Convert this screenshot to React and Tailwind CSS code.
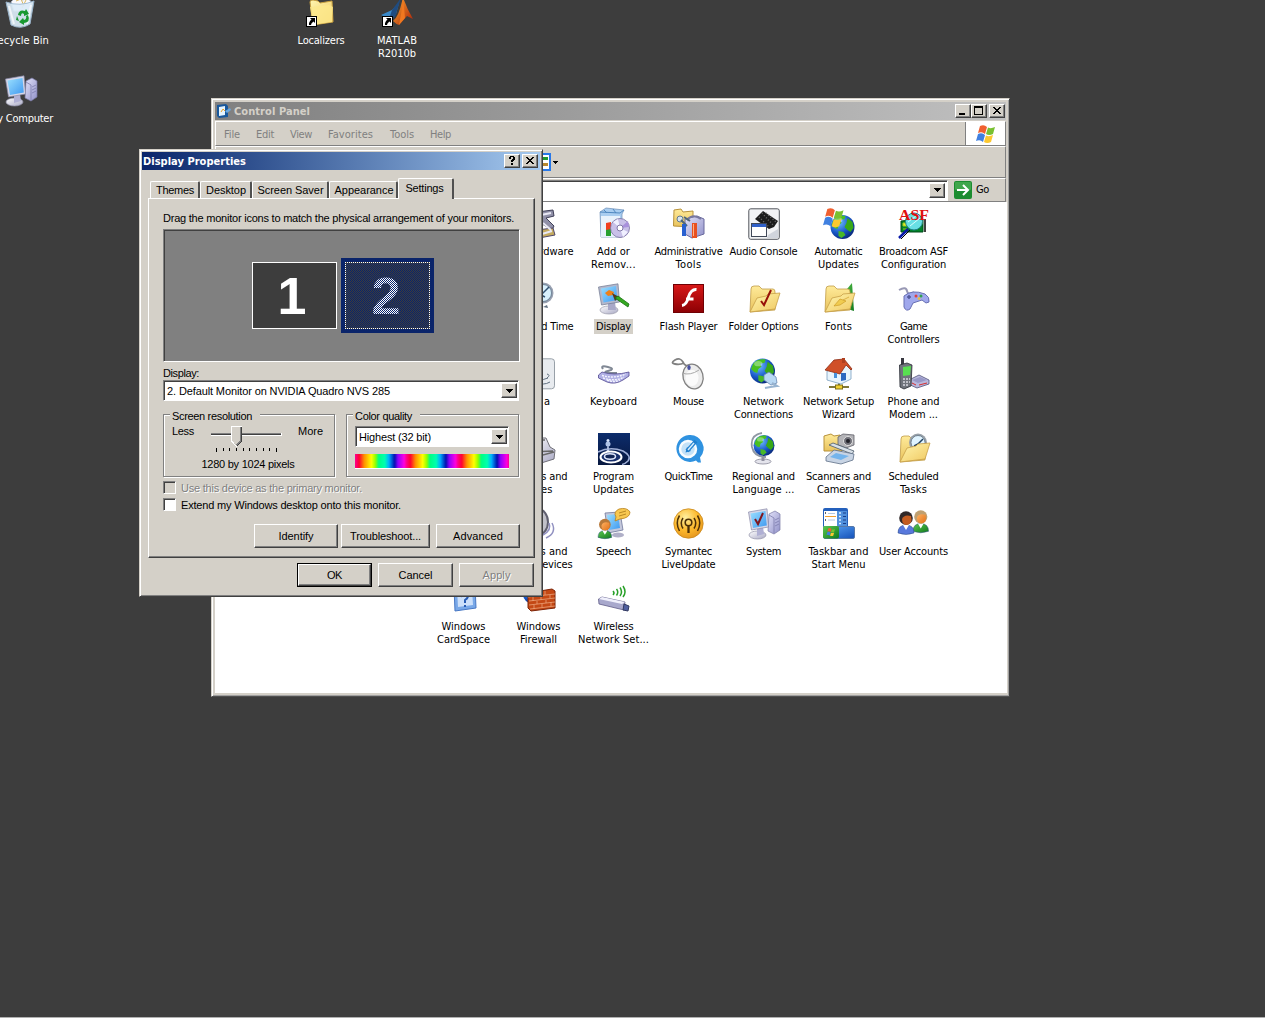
import { useLayoutEffect, useRef } from "react";

const tahoma = "font-['DejaVu_Sans_Condensed','DejaVu_Sans',sans-serif]";
const sans = "font-['Liberation_Sans',sans-serif]";

/* One line of text whose tracking is adjusted so that it fills a given width. */
function Fit({ w, className = "", children }) {
  const ref = useRef(null);
  useLayoutEffect(() => {
    const el = ref.current;
    el.style.letterSpacing = "0px";
    const natural = el.getBoundingClientRect().width;
    el.style.letterSpacing = `${(w + 1 - natural) / el.textContent.length}px`;
  }, [w, children]);
  return (
    <span ref={ref} className={`inline-block whitespace-nowrap ${className}`}>
      {children}
    </span>
  );
}

function Defs() {
  const lin = (id, a, b, diag) => (
    <linearGradient id={id} x1="0" y1="0" x2={diag ? "1" : "0"} y2="1">
      <stop offset="0" stopColor={a} />
      <stop offset="1" stopColor={b} />
    </linearGradient>
  );
  return (
    <svg width="0" height="0" className="absolute">
      <defs>
        {lin("folder", "#fff6b0", "#f0c860", true)}
        {lin("folderBack", "#ffeb9a", "#e8c25c")}
        {lin("screen", "#9be0ff", "#3f98f0", true)}
        {lin("silver", "#ffffff", "#a8a8c4", true)}
        {lin("lilac", "#e4e4fa", "#9090c8", true)}
        {lin("red", "#d81818", "#8c0004")}
        {lin("green", "#5cc850", "#117a1c", true)}
        {lin("blue", "#5ca8f8", "#1450b8", true)}
        {lin("orange", "#ffb060", "#e07018", true)}
        {lin("navy", "#0c2c6c", "#081840")}
        {lin("flame", "#ffb030", "#a81c08", true)}
        <radialGradient id="sea" cx="0.35" cy="0.3" r="0.75">
          <stop offset="0" stopColor="#70c0ff" />
          <stop offset="0.6" stopColor="#1858c8" />
          <stop offset="1" stopColor="#082878" />
        </radialGradient>
        <radialGradient id="amber" cx="0.4" cy="0.3" r="0.7">
          <stop offset="0" stopColor="#fff0a0" />
          <stop offset="0.6" stopColor="#fdb92c" />
          <stop offset="1" stopColor="#e89a20" />
        </radialGradient>
      </defs>
    </svg>
  );
}

function Globe({ x = 16, y = 14, r = 12 }) {
  return (
    <g transform={`translate(${x} ${y}) scale(${r / 12})`}>
      <circle r="12" fill="url(#sea)" />
      <path d="M-9-7C-6-11-1-12 3-11L2-8-2-7-1-4-4-2-5 2-8 1-11-2Z" fill="#48c020" />
      <path d="M5-9 10-5 11 1 8 5 5 3 2 0 4-4Z" fill="#38a818" />
      <path d="M-4 4 1 5 3 8-1 11-4 9Z" fill="#48b828" />
      <ellipse cx="-4" cy="-7" rx="4" ry="2.5" fill="#fff" opacity=".35" />
    </g>
  );
}

function Flag({ x = 0, y = 0, s = 1 }) {
  return (
    <g transform={`translate(${x} ${y}) scale(${s})`}>
      <path d="M4 1Q8-1 11 2L9 9Q6 6 2 8Z" fill="#f06030" />
      <path d="M12 2.500Q15 4 19 2L17 9Q13 11 10 9Z" fill="#78c030" />
      <path d="M2 9Q6 7 9 10L7 17Q4 14 0 16Z" fill="#4080e0" />
      <path d="M10 10.500Q13 12 17 10L15 17Q11 19 8 17Z" fill="#fcc830" />
    </g>
  );
}

function Folder({ children }) {
  return (
    <>
      <path d="M2 29 3 6Q3 3 6 3L11 3 14 6 25 6Q27 6 27 9L27 27Z" fill="url(#folderBack)" stroke="#c09c48" strokeWidth=".8" />
      {children}
      <path d="M2 29 9 15 18 13 20 11 32 10 27 26Z" fill="url(#folder)" stroke="#c8a048" strokeWidth=".8" />
    </>
  );
}

function Computer({ children }) {
  return (
    <>
      <path d="M21 6 27 3 32 6 32 22 26 26 20 23Z" fill="url(#lilac)" stroke="#7878a4" strokeWidth=".7" />
      <path d="M21 7 26 10 26 25M27 12 31 10M27 15 31 13M27 18 31 16" stroke="#7c7cac" fill="none" strokeWidth=".8" />
      <ellipse cx="9.500" cy="27" rx="8.500" ry="4" fill="url(#silver)" stroke="#9090a8" strokeWidth=".7" />
      <path d="M9 20 15 19 16 26 9 28Z" fill="#b0b0d4" />
      <path d="M.5 4 19 .8 20.500 19 3.500 22Z" fill="#d8d8e8" stroke="#8888a8" strokeWidth=".7" />
      <path d="M2.500 5.500 17.500 3 18.800 17.500 5 20Z" fill="url(#screen)" />
      {children}
    </>
  );
}

function Person({ x, y, s = 1, hair, face, body }) {
  return (
    <g transform={`translate(${x} ${y}) scale(${s})`}>
      <path d="M0 22Q0 14 8 14Q16 14 16 22Q8 25 0 22Z" fill={body} stroke="#284880" strokeWidth=".5" />
      <path d="M5 14 8 19 11 14Z" fill="#fff" />
      <circle cx="8" cy="7" r="6.800" fill={hair} />
      <path d="M4 8Q6 3 13 5Q15 13 9 14Q4 14 4 8Z" fill={face} />
    </g>
  );
}

const art = {
  hardware: (
    <>
      <path d="M14 4 30 2 31 8 23 10 31 18 29 22 16 14Z" fill="#9090a8" stroke="#404058" />
      <path d="M14 22 30 20 32 27 16 30Z" fill="#c4ab60" stroke="#50486c" />
      <path d="M18 7 28 5M20 15 28 22M19 26 29 23" stroke="#e8e8f4" strokeWidth="2" />
    </>
  ),
  clock: (
    <>
      <circle cx="20" cy="10" r="10.500" fill="#98a0b0" />
      <circle cx="20" cy="10" r="8.500" fill="#d8f0fc" stroke="#506880" strokeWidth=".7" />
      <path d="M18 12 26 4M18 12 22 14" stroke="#305070" strokeWidth="1.500" />
      <path d="M20 24 24 22 25 25Z" fill="#607080" />
    </>
  ),
  java: (
    <>
      <rect x="3" y=".8" width="28.500" height="30" rx="3" fill="#e8ebef" stroke="#98a0a8" />
      <path d="M14 24Q20 28 27 24M16 20Q20 23 25 20M16 8Q21 9 18 14M24 16Q28 17 24 20" stroke="#607080" fill="none" />
    </>
  ),
  printer: (
    <>
      <path d="M12 5 23 5 27 14 32 17 31 26 15 31 4 25Z" fill="url(#silver)" stroke="#707078" />
      <path d="M8 19 30 18M16 29 16 23 31 19M14 7 22 7" stroke="#686868" fill="none" strokeWidth="1.500" />
    </>
  ),
  speaker: (
    <>
      <ellipse cx="15" cy="14" rx="10" ry="13" fill="#c0c0c8" stroke="#606070" strokeWidth="2" />
      <ellipse cx="13" cy="14" rx="5" ry="8" fill="#707080" />
      <path d="M26 15Q29 22 20 27M29 15Q34 25 23 30" stroke="#9090c0" strokeWidth="1.500" fill="none" />
    </>
  ),
  addRemove: (
    <>
      <path d="M2 4 8 0 26 2 24 6 24 29 3 29Z" fill="#a9cdf0" stroke="#6c8cb4" strokeWidth=".7" />
      <path d="M3 8 22 8 22 29 3 29Z" fill="#e8f2fc" />
      <path d="M2 4 22 5 26 2M6 2 9 5M15 1 18 5" stroke="#5088c0" fill="none" />
      <path d="M8 15 13 14 13 22 8 22Z" fill="#f04020" />
      <path d="M8 22 13 21 13 28 8 28Z" fill="#28a030" />
      <circle cx="22" cy="20" r="9.500" fill="#c8c0e8" stroke="#7870a0" strokeWidth=".8" />
      <path d="M22 20 15 14 20 11ZM22 20 30 24 25 29Z" fill="#f0f0ff" />
      <path d="M22 20 30 13 31 19Z" fill="#a890dc" />
      <circle cx="22" cy="20" r="3" fill="#fff" stroke="#8078a8" />
    </>
  ),
  admin: (
    <>
      <path d="M.5 18 1 2 8 1 10 4 20 3 20 19Z" fill="url(#folderBack)" stroke="#b8923a" />
      <path d="M12 11 24 8 31 11 31 26 19 30 12 26Z" fill="url(#lilac)" stroke="#68689c" />
      <path d="M14 12Q20 5 28 11" stroke="#7878a0" fill="none" strokeWidth="2" />
      <circle cx="7" cy="11" r="3" fill="#d8e4ec" stroke="#607890" />
      <path d="M8 12 14 18M11 9 17 13" stroke="#506878" strokeWidth="2" />
      <path d="M9 16 13 16 13 28 9 28Z" fill="#2860d0" />
      <path d="M19 15 24 15 24 30 19 30Z" fill="#e85020" />
      <path d="M20.500 16 20.500 28" stroke="#ffb080" />
    </>
  ),
  audio: (
    <>
      <rect x=".8" y=".8" width="30.500" height="30.500" rx="2" fill="#f2f3f5" stroke="#40444c" strokeWidth=".9" />
      <path d="M15 3 30 13 26 19 21 21 7 11Z" fill="#1c1c1c" />
      <path d="M14 5 25 17M11 9 20 18M18 5 28 14" stroke="#686868" strokeDasharray="1 2" strokeWidth="1.500" />
      <rect x="3.500" y="15.500" width="15" height="13" fill="#fff" stroke="#404858" />
      <rect x="4" y="16" width="14" height="3" fill="#3060c8" />
      <path d="M20 27 30 21 30 30 19 30Z" fill="#d0d4dc" />
    </>
  ),
  updates: (
    <>
      <Globe x={19.5} y={19} r={12} />
      <Flag x={0} y={0} s={1.08} />
    </>
  ),
  asf: (
    <>
      <path d="M3 13 25 11 25 24 3 24Z" fill="#008428" stroke="#004818" />
      <path d="M5 15H9V18H5ZM5 21H9M20 13H24V16H20Z" fill="#e8f028" stroke="#a0c820" />
      <path d="M27 11V24" stroke="#000" strokeWidth="1.500" />
      <circle cx="16" cy="13.500" r="8.500" fill="#68e0e4" stroke="#208088" />
      <path d="M10 14 18 8M12 18 22 10" stroke="#d8ffff" />
      <path d="M10 21 1 30" stroke="#0818a8" strokeWidth="2.500" />
      <path d="M12 22 3 31" stroke="#000" />
      <text x="1" y="11.500" textLength="30" lengthAdjust="spacingAndGlyphs" fontFamily="Liberation Serif" fontWeight="bold" fontSize="15" fill="#e01010">ASF</text>
    </>
  ),
  display: (
    <>
      <ellipse cx="11" cy="27" rx="9" ry="4" fill="url(#silver)" stroke="#9898a8" strokeWidth=".7" />
      <path d="M10 20 17 19 18 27 10 27Z" fill="#a8a8c8" />
      <path d="M.5 4 20 .8 21.500 19 3.500 22Z" fill="#b4b8cc" stroke="#707890" strokeWidth=".7" />
      <path d="M3 5.500 18 3 19.500 17 5.500 19.500Z" fill="url(#screen)" />
      <path d="M7 10 11 7 16 9 15 12 10 13Z" fill="#f08018" />
      <path d="M14 10 21 14 17 18Z" fill="#583818" />
      <path d="M17 15 20 13 31 21 30 24Z" fill="#34a820" stroke="#187010" strokeWidth=".8" />
    </>
  ),
  flash: (
    <>
      <rect x=".5" y="1.500" width="30" height="28" fill="url(#red)" stroke="#700004" />
      <path d="M23.500 6.500Q18 6 15.500 14Q13.500 22 9 22.500M13 16H20.500" stroke="#fff" strokeWidth="3" fill="none" />
    </>
  ),
  folderOptions: (
    <>
      <Folder />
      <path d="M13 18 16 22 23 7" stroke="#981008" strokeWidth="2" fill="none" />
    </>
  ),
  fonts: (
    <>
      <path d="M19 12 29 0 31 28 18 24Z" fill="url(#green)" />
      <Folder />
      <path d="M11 23 17 16 23 18 17 22ZM20 17 26 14" stroke="#c89420" strokeWidth=".6" fill="#f0cc50" />
    </>
  ),
  game: (
    <>
      <path d="M1 7Q8 3 9 8T16 9" stroke="#9898b4" strokeWidth="2" fill="none" />
      <path d="M6 13Q14 6 27 11Q32 14 31 19L28 20 24 17 15 20 12 26Q8 29 6 24Z" fill="#a0a8ec" stroke="#6870b4" />
      <path d="M9 14H13M11 12V16" stroke="#505898" strokeWidth="1.500" />
      <circle cx="18" cy="13" r="1.500" fill="#e04040" />
      <circle cx="23" cy="13" r="1.500" fill="#30a050" />
      <circle cx="21" cy="15.500" r="1.300" fill="#f0c030" />
    </>
  ),
  keyboard: (
    <>
      <path d="M5 11Q2 7 10 9T10 13T19 15" stroke="#808894" strokeWidth="2" fill="none" />
      <path d="M.5 17 4 14Q16 18 31 14L31 18 25 22Q17 27 9 24L.5 20Z" fill="#b0b0e4" stroke="#504890" strokeWidth=".8" />
      <path d="M4 17.500Q16 21 28 16M5 20Q17 24 26 19M9 22Q17 25 22 22" stroke="#f4f4ff" strokeDasharray="2 1" strokeWidth="1.400" fill="none" />
    </>
  ),
  mouse: (
    <>
      <path d="M17 7Q12 9 10 4Q7-1 2 2T2 6Q7 7 11 5" stroke="#808080" strokeWidth="1.800" fill="none" />
      <ellipse cx="20" cy="18.500" rx="10" ry="12.500" fill="#ececec" stroke="#808080" strokeWidth="1.300" transform="rotate(-15 20 18.500)" />
      <ellipse cx="19" cy="20" rx="6.500" ry="8" fill="#fff" opacity=".8" />
      <path d="M9 15Q17 18 26 12" stroke="#aaa" fill="none" />
      <ellipse cx="16" cy="9.500" rx="1.700" ry="2.500" fill="#4850a0" />
    </>
  ),
  network: (
    <>
      <Globe x={14.5} y={13} r={12.5} />
      <path d="M16 17 21 14 28 19 29 25 23 27 16 22Z" fill="#b8d8f4" stroke="#6888b0" strokeWidth=".8" />
      <path d="M24 25 29 28Q22 29 17 30" stroke="#98b4d0" strokeWidth="2.200" fill="none" />
    </>
  ),
  house: (
    <>
      <path d="M6 29H26M16 23V30" stroke="#807838" strokeWidth="2" />
      <rect x="12.500" y="27" width="7" height="4" fill="#f0d030" stroke="#807018" />
      <path d="M4 13 4 22 18 26 28 21 28 11 22 4Z" fill="#e8f4fc" stroke="#78a0c0" strokeWidth=".8" />
      <path d="M2 12 11 2 21 1 29 11 28 12 23 7 17 16Z" fill="#d05028" stroke="#8c2c14" strokeWidth=".8" />
      <path d="M19 0H22V5H19Z" fill="#b04020" />
      <path d="M18 15H23V22L18 23Z" fill="#2c68c0" />
      <path d="M11 15H14V20H11Z" fill="#4890d8" />
    </>
  ),
  phone: (
    <>
      <path d="M11 22 21 17 31 22 31 26 19 30 10 26Z" fill="#b8b8dc" stroke="#505078" strokeWidth=".8" />
      <path d="M14 22 22 19 29 22 20 25Z" fill="#9898c8" />
      <path d="M14 25 18 27M21 27 29 25" stroke="#d83030" />
      <path d="M3 0H6V8H3Z" fill="#383840" />
      <path d="M1.500 7 9 5 14 7 13 28 6 31 2 29Z" fill="#70747c" stroke="#282c34" strokeWidth=".8" />
      <path d="M5 9 13 8 12 17 5 18Z" fill="#58e050" />
      <path d="M5 21H12M5 24H12M5 27H11" stroke="#d8d8e0" strokeDasharray="2 1" strokeWidth="1.500" />
    </>
  ),
  program: (
    <>
      <rect width="32" height="32" fill="url(#navy)" />
      <circle cx="10" cy="7.500" r="1.500" fill="#dce8ff" />
      <circle cx="10" cy="11" r="2.500" fill="#b0c4e8" />
      <path d="M9.500 13 10.500 13 12 21 8 21Z" fill="#c8d4f0" />
      <path d="M0 19Q12 13 25 18Q34 23 30 28Q27 31 24 31.500" stroke="#a0b0d8" fill="none" strokeWidth="1.500" />
      <ellipse cx="13" cy="24" rx="10.500" ry="5.500" stroke="#fff" fill="#18306c" strokeWidth="2" />
      <ellipse cx="12" cy="23.500" rx="5.500" ry="2.700" stroke="#dce4f8" fill="#102454" strokeWidth="1.500" />
    </>
  ),
  quicktime: (
    <>
      <path d="M16 2A13.500 13.500 0 1 0 23 27.500L25 29.500 28 29.500 27 24.500A13.500 13.500 0 0 0 16 2Z" fill="#2f92e0" />
      <circle cx="15" cy="16" r="8" fill="#c4e2f8" stroke="#f8fcff" strokeWidth="2.500" />
      <path d="M14 18 23 8" stroke="#2080d0" strokeWidth="4" />
      <path d="M12.500 19.500 14 14 18 18Z" fill="#2080d0" />
      <path d="M15 17 21 10" stroke="#d8eefc" strokeWidth="1.500" />
    </>
  ),
  regional: (
    <>
      <ellipse cx="15" cy="28.500" rx="8" ry="2.500" fill="#e4e4ec" stroke="#888898" strokeWidth=".8" />
      <path d="M15 23V28" stroke="#9090a0" strokeWidth="3" />
      <path d="M14 0Q2 2 4 14Q6 24 18 24" stroke="#9098a4" strokeWidth="1.800" fill="none" />
      <Globe x={16} y={12.5} r={10.5} />
    </>
  ),
  scanner: (
    <>
      <path d="M1 18 1 3 8 1 11 3 17 2 19 18Z" fill="url(#folderBack)" stroke="#b8923a" />
      <path d="M15 4 20 1 31 2 31 12 23 15 15 12Z" fill="#b4b4b8" stroke="#606068" strokeWidth=".8" />
      <circle cx="25" cy="8" r="4.500" fill="#707078" stroke="#e0e0e0" />
      <circle cx="25" cy="8" r="2" fill="#202028" />
      <path d="M6 12 10 10 31 18 29 21Z" fill="#d8e0e8" stroke="#485868" strokeWidth=".8" />
      <path d="M3 24 11 17 31 21 30 27 18 31 3 28Z" fill="#c8d4e4" stroke="#607088" strokeWidth=".8" />
      <path d="M7 24 13 20 26 23 18 27Z" fill="#74b4ec" />
    </>
  ),
  scheduled: (
    <Folder>
      <circle cx="20" cy="9.500" r="9" fill="#98a0a8" />
      <circle cx="20" cy="9.500" r="7" fill="#e0f4ff" stroke="#607080" strokeWidth=".8" />
      <path d="M20 11 25 6M20 11 16 13" stroke="#204060" strokeWidth="1.500" />
    </Folder>
  ),
  speech: (
    <>
      <path d="M7 5 22 4 25 22 10 25Z" fill="#c4c8dc" stroke="#70789c" strokeWidth=".8" />
      <path d="M9 7 20 6 22 20 11 22Z" fill="url(#screen)" />
      <ellipse cx="20" cy="27" rx="6" ry="2.500" fill="#b0b0c8" />
      <path d="M17 13 18 9Q15 4 21 1Q29-1 32 4Q32 10 22 11Z" fill="#f8c850" stroke="#b88018" strokeWidth=".8" />
      <path d="M21 5 28 3M21 8 28 6" stroke="#a87818" strokeWidth=".8" />
      <Person x={0} y={10.5} s={0.86} hair="#b87838" face="url(#orange)" body="url(#green)" />
    </>
  ),
  symantec: (
    <>
      <circle cx="15.500" cy="15.500" r="14.700" fill="url(#amber)" stroke="#c88820" strokeWidth=".8" />
      <circle cx="15.500" cy="14.500" r="3.300" fill="none" stroke="#4c3008" strokeWidth="1.600" />
      <path d="M15.500 17V25" stroke="#4c3008" strokeWidth="2.300" />
      <path d="M10 10Q6.500 15 10 20.500M6.500 7.500Q2 15 6.500 23M21 10Q24.500 15 21 20.500M24.500 7.500Q29 15 24.500 23" stroke="#4c3008" strokeWidth="1.500" fill="none" />
    </>
  ),
  computer: <Computer />,
  system: (
    <Computer>
      <path d="M7 11 10 16 15 5" stroke="#801820" strokeWidth="2" fill="none" />
    </Computer>
  ),
  taskbar: (
    <>
      <rect x="0" y="0" width="25" height="20" rx="2" fill="#2460bc" />
      <path d="M1 3H14V18H1Z" fill="#fff" />
      <path d="M14 3H24V18H14Z" fill="#5090dc" />
      <path d="M2 5H3M2 12H3" stroke="#303030" strokeWidth="1.500" />
      <path d="M2 8.500H13" stroke="#f0a030" />
      <path d="M5 5.500H12M5 12H12" stroke="#b4c8e0" />
      <path d="M16 5H18M16 8.500H18M16 12H18M16 15.500H18" stroke="#d8ecff" strokeWidth="1.700" />
      <path d="M20 5H23M20 8.500H23M20 12H23M20 15.500H23" stroke="#183c88" />
      <rect x=".5" y="18.500" width="31" height="12" rx="1.500" fill="url(#blue)" stroke="#5878a8" />
      <rect x="0" y="18" width="16" height="12.500" rx="2" fill="url(#green)" />
      <Flag x={3.5} y={20} s={0.45} />
    </>
  ),
  users: (
    <>
      <Person x={15} y={2} s={0.97} hair="#c0a070" face="url(#orange)" body="url(#green)" />
      <Person x={0} y={3} s={1} hair="#302828" face="#c45c20" body="#5878dc" />
    </>
  ),
  cardspace: (
    <>
      <path d="M6 4 27 2 28 25 7 28Z" fill="#78a8e8" stroke="#4878c4" />
      <path d="M9 6 24 5 25 22 10 24Z" fill="#cce0fa" />
      <path d="M13 14Q14 10 18 11Q22 14 17 17V20M17 22V24" stroke="#285cb4" strokeWidth="2" fill="none" />
    </>
  ),
  firewall: (
    <>
      <Globe x={10} y={11} r={10} />
      <path d="M5 10 29 6 32 8 32 25 8 28 5 25Z" fill="#c44814" stroke="#7c2408" />
      <path d="M5 14 32 11M6 18 32 15M6 22 32 19M7 26 32 23M13 9V13M22 8V12M10 14V18M18 13V17M27 12V15M14 18V21M23 17V20M11 22V26M19 21V24M28 19V23" stroke="#f0b088" strokeWidth=".7" />
    </>
  ),
  wireless: (
    <>
      <path d="M.5 16 4 14 27 19 26 27 1 21Z" fill="#a8a8cc" stroke="#605c88" strokeWidth=".8" />
      <path d="M1 16 4 14 27 19 24 21Z" fill="#f0f0fc" />
      <path d="M26 21 31 23 30 28 25 27Z" fill="#5060a0" stroke="#303860" />
      <path d="M15 8Q17 10 15 12M18.500 6Q21 9 18.500 12.500M22 4.500Q25 9 22 13M25 3Q29 9 25 14" stroke="#28a028" strokeWidth="1.500" fill="none" />
    </>
  ),
  bin: (
    <>
      <path d="M7 5 12 0 19 3 24 0 28 7 25 14 10 14Z" fill="#f8f8fc" stroke="#a8b0c0" />
      <path d="M12 4 17 2 20 9M22 3 18 11" stroke="#d8b860" fill="none" />
      <path d="M2 5Q16 10 30 4L26 27Q17 33 7 28Z" fill="#dcecf8" opacity=".92" stroke="#a0bcd4" />
      <path d="M5 9 10 27M27 8 23 27" stroke="#fff" strokeWidth="2" opacity=".7" />
      <path d="M14 18Q15 12 21 14L22 12 25 17 20 19 20 17Q17 15 17 19ZM24 18Q27 25 20 26L20 28 15 25 19 21 20 23Q23 22 22 19ZM13 19 15 24 12 23Z" fill="#189830" />
    </>
  ),
  shortcutFolder: (
    <>
      <path d="M5 5Q5 3 8 3L13 4 15 6 27 4 28 25 8 28Z" fill="url(#folder)" stroke="#c8a040" />
      <path d="M5 10 24 8 28 10 27 25 8 28Z" fill="#fce88c" opacity=".8" />
    </>
  ),
  matlab: (
    <>
      <path d="M0 18 11 13 18 6 15 17 8 22Z" fill="#3888c8" />
      <path d="M11 13 20 1 14 20 8 22Z" fill="#204c80" />
      <path d="M22 0Q25 10 32 22L26 19 18 28Q15 27 12 24Q18 20 22 0Z" fill="url(#flame)" />
      <path d="M22 0Q21 14 18 28L24 21Z" fill="#f07820" />
    </>
  ),
};

function Icon({ name, className = "size-8" }) {
  return (
    <svg viewBox="0 0 32 32" className={`block shrink-0 overflow-visible ${className}`}>
      {art[name]}
    </svg>
  );
}

const items = [
  null,
  ["hardware", ["Add Hardware", 69]],
  ["addRemove", ["Add or", 32], ["Remov...", 44]],
  ["admin", ["Administrative", 67], ["Tools", 25]],
  ["audio", ["Audio Console", 67]],
  ["updates", ["Automatic", 47], ["Updates", 40]],
  ["asf", ["Broadcom ASF", 68], ["Configuration", 64]],
  null,
  ["clock", ["Date and Time", 69]],
  ["display", ["Display", 34]],
  ["flash", ["Flash Player", 57]],
  ["folderOptions", ["Folder Options", 69]],
  ["fonts", ["Fonts", 26]],
  ["game", ["Game", 26], ["Controllers", 51]],
  null,
  ["java", ["Java", 24]],
  ["keyboard", ["Keyboard", 46]],
  ["mouse", ["Mouse", 30]],
  ["network", ["Network", 40], ["Connections", 58]],
  ["house", ["Network Setup", 70], ["Wizard", 32]],
  ["phone", ["Phone and", 51], ["Modem ...", 48]],
  null,
  ["printer", ["Printers and", 57], ["Faxes", 27]],
  ["program", ["Program", 40], ["Updates", 40]],
  ["quicktime", ["QuickTime", 47]],
  ["regional", ["Regional and", 62], ["Language ...", 61]],
  ["scanner", ["Scanners and", 64], ["Cameras", 42]],
  ["scheduled", ["Scheduled", 49], ["Tasks", 26]],
  null,
  ["speaker", ["Sounds and", 57], ["Audio Devices", 67]],
  ["speech", ["Speech", 34]],
  ["symantec", ["Symantec", 46], ["LiveUpdate", 53]],
  ["system", ["System", 34]],
  ["taskbar", ["Taskbar and", 59], ["Start Menu", 53]],
  ["users", ["User Accounts", 68]],
  ["cardspace", ["Windows", 43], ["CardSpace", 52]],
  ["firewall", ["Windows", 43], ["Firewall", 36]],
  ["wireless", ["Wireless", 39], ["Network Set...", 70]],
];

function Item({ item }) {
  if (!item) return <div />;
  const [icon, ...lines] = item;
  return (
    <div className="flex flex-col items-center">
      <Icon name={icon} />
      <div className={`mt-1 flex flex-col items-center px-0.5 py-px leading-[13px] ${icon === "display" ? "bg-[#d4d0c8]" : ""}`}>
        {lines.map(([text, w]) => (
          <Fit key={text} w={w} className="h-[13px]">{text}</Fit>
        ))}
      </div>
    </div>
  );
}

const raised = "border border-t-white border-l-white border-r-[#404040] border-b-[#404040] bg-[#d4d0c8] shadow-[inset_-1px_-1px_0_#808080]";
const sunken = "border border-t-[#808080] border-l-[#808080] border-r-white border-b-white shadow-[inset_1px_1px_0_#404040]";

function TitleButton({ children, className = "" }) {
  return (
    <div className={`flex h-[14px] w-4 items-center justify-center ${raised} ${className}`}>
      <svg viewBox="0 0 14 12" className="h-3 w-[14px]" shapeRendering="crispEdges">{children}</svg>
    </div>
  );
}

const Cross = () => <path d="M3 2H5V3H6V4H8V3H9V2H11V3H10V4H9V5H8V6H9V7H10V8H11V9H9V8H8V7H6V8H5V9H3V8H4V7H5V6H6V5H5V4H4V3H3Z" fill="#000" />;

function DropArrow({ className = "" }) {
  return (
    <div className={`flex w-4 items-center justify-center ${raised} ${className}`}>
      <svg viewBox="0 0 7 4" className="h-1 w-[7px]" shapeRendering="crispEdges"><path d="M0 0H7L3.500 4Z" /></svg>
    </div>
  );
}

function ControlPanel() {
  const menu = [["File", 16, "mr-4"], ["Edit", 18, "mr-4"], ["View", 22, "mr-4"], ["Favorites", 45, "mr-[17px]"], ["Tools", 24, "mr-4"], ["Help", 21, ""]];
  return (
    <section className={`absolute left-[211px] top-[98px] flex h-[599px] w-[799px] flex-col border border-t-[#d4d0c8] border-l-[#d4d0c8] border-r-[#404040] border-b-[#505050] bg-[#d4d0c8] p-[3px] text-[11px] shadow-[inset_1px_1px_0_#fff,inset_-1px_-1px_0_#a0a0a0] ${tahoma}`}>
      <header className="flex h-[18px] shrink-0 items-center bg-linear-to-r from-[#808080] to-[#c0c0c0] pr-px pl-px">
        <svg viewBox="0 0 16 16" className="mr-0.5 size-4">
          <path d="M1 2 10 1 12 3 12 14 3 15 1 13Z" fill="#18589c" />
          <path d="M3 4 9 3 9 12 3 13Z" fill="#e4f4ff" />
          <path d="M5 9 7 6 9 8" fill="none" stroke="#f0a020" />
          <path d="M9 8 14 5 15 7 11 10Z" fill="#68a8e0" />
        </svg>
        <Fit w={75} className="pt-0.5 font-bold text-[#d4d0c8]">Control Panel</Fit>
        <div className="ml-auto flex">
          <TitleButton><path d="M3 8H9V10H3Z" /></TitleButton>
          <TitleButton><path d="M2 1H11V10H2ZM3 3V9H10V3Z" fillRule="evenodd" /></TitleButton>
          <TitleButton className="ml-0.5"><Cross /></TitleButton>
        </div>
      </header>
      <div className="mt-px flex h-[25px] shrink-0 border border-t-white border-l-white border-r-[#808080] border-b-[#808080]">
        <nav className="flex flex-1 items-center border-r border-[#808080] pt-[3px] pl-2 text-[#808080]">
          {menu.map(([label, w, gap]) => (
            <Fit key={label} w={w - 1} className={gap}>{label}</Fit>
          ))}
        </nav>
        <div className="flex w-[39px] items-center justify-center bg-white">
          <svg viewBox="0 0 19 18" className="h-[18px] w-[19px]"><Flag /></svg>
        </div>
      </div>
      <div className="flex h-8 shrink-0 items-center border border-t-white border-l-white border-r-[#808080] border-b-[#808080] pl-[317px]">
        <svg viewBox="0 0 18 18" className="size-[18px]">
          <rect x="1" y="1" width="16" height="16" fill="#fff" stroke="#2878e8" strokeWidth="2" />
          <path d="M10 4H15V7H10Z" fill="#209830" />
          <path d="M10 10H15V13H10Z" fill="#b88830" />
        </svg>
        <svg viewBox="0 0 5 3" className="ml-0.5 h-[3px] w-[5px]" shapeRendering="crispEdges"><path d="M0 0H5L2.500 3Z" /></svg>
      </div>
      <div className="flex h-6 shrink-0 items-center border border-t-white border-l-white border-r-[#808080] border-b-[#808080]">
        <div className={`ml-14 flex h-[21px] w-[676px] justify-end bg-white p-0.5 ${sunken}`}>
          <DropArrow />
        </div>
        <svg viewBox="0 0 18 18" className="ml-1.5 size-[18px]">
          <rect width="18" height="18" rx="2" fill="#1c8c30" />
          <rect x="1" y="1" width="16" height="8" rx="1" fill="#50b058" opacity=".7" />
          <path d="M3 9H14M9 4 14 9 9 14" stroke="#fff" strokeWidth="2" fill="none" />
        </svg>
        <Fit w={12} className="ml-1">Go</Fit>
      </div>
      <main className="-mr-px flex-1 bg-white pt-1.5 pl-[211px]">
        <div className="grid grid-cols-[repeat(7,75px)] auto-rows-[75px]">
          {items.map((item, i) => <Item key={i} item={item} />)}
        </div>
      </main>
    </section>
  );
}

function Tab({ children, w, className }) {
  return (
    <div className={`flex justify-center rounded-t-[2px] border-t border-l border-white border-r-2 border-r-[#505050] ${className}`}>
      <Fit w={w} className="leading-4">{children}</Fit>
    </div>
  );
}

function Button({ children, w, className }) {
  return (
    <div className={`flex h-6 items-center justify-center ${raised} ${className}`}>
      <Fit w={w}>{children}</Fit>
    </div>
  );
}

function Slider() {
  return (
    <svg viewBox="0 0 72 30" className="h-[30px] w-[72px]" shapeRendering="crispEdges">
      <path d="M0 7H70V8H0Z" fill="#808080" />
      <path d="M0 8H70V9H0Z" fill="#404040" />
      <path d="M0 9H71V10H0ZM70 7H71V10H70Z" fill="#fff" />
      <path d="M20.500.5H30.500V15L25.500 20.500 20.500 15Z" fill="#d4d0c8" stroke="#fff" />
      <path d="M30.500.5V15L25.500 20.500" fill="none" stroke="#404040" />
      <path d="M29.500 1V15L25.500 19" fill="none" stroke="#808080" />
      <path d="M5.500 22V26M65.500 22V26M12.500 22V25M18.500 22V25M25.500 22V25M32.500 22V25M38.500 22V25M45.500 22V25M52.500 22V25M58.500 22V25" stroke="#000" />
    </svg>
  );
}

function Group({ title, titleWidth, className, children }) {
  return (
    <div className={`relative flex h-[63px] flex-col border border-[#808080] shadow-[1px_1px_0_#fff,inset_1px_1px_0_#fff] ${className}`}>
      <Fit w={titleWidth} className="absolute -top-1.5 left-[6px] bg-[#d4d0c8] pr-2 pl-0.5 leading-[14px]">{title}</Fit>
      {children}
    </div>
  );
}

function DisplayProperties() {
  return (
    <section className={`absolute left-[139px] top-[149px] flex h-[448px] w-[404px] flex-col border border-t-[#d4d0c8] border-l-[#d4d0c8] border-r-[#404040] border-b-[#404040] bg-[#d4d0c8] p-0.5 text-[11px] text-black shadow-[inset_1px_1px_0_#fff,inset_-1px_-1px_0_#808080] ${sans}`}>
      <header className="flex h-[18px] shrink-0 items-center bg-linear-to-r from-[#0a246a] to-[#a6caf0] pr-0.5 pl-px">
        <Fit w={102} className={`pt-0.5 font-bold text-white ${tahoma}`}>Display Properties</Fit>
        <div className="ml-auto flex gap-0.5">
          <TitleButton><path d="M4 2H5V1H9V2H10V5H9V6H8V7H6V5H7V4H8V2H6V4H4ZM6 8H8V10H6Z" /></TitleButton>
          <TitleButton><Cross /></TitleButton>
        </div>
      </header>
      <div className="mt-[8px] ml-2 flex h-5 shrink-0 items-end">
        <Tab w={37} className="h-[17px] w-[50px] pl-px">Themes</Tab>
        <Tab w={39} className="h-[17px] w-[52px] pl-px">Desktop</Tab>
        <Tab w={65} className="h-[17px] w-[77px] pl-px">Screen Saver</Tab>
        <Tab w={58} className="h-[17px] w-[69px] border-r-0 pl-0.5">Appearance</Tab>
        <Tab w={37} className="z-10 -mb-px h-[21px] w-[56px] bg-[#d4d0c8] pt-px pr-0.5">Settings</Tab>
      </div>
      <div className={`ml-1.5 flex h-[360px] w-[387px] shrink-0 flex-col pl-[14px] ${raised}`}>
        <Fit w={350} className="mt-3 h-[14px] self-start leading-[14px]">Drag the monitor icons to match the physical arrangement of your monitors.</Fit>
        <div className={`mt-[4px] flex h-[133px] w-[357px] shrink-0 items-center justify-center gap-1 bg-[#808080] ${sunken}`}>
          <div className="ml-[2px] flex h-[67px] w-[85px] items-center justify-center border border-white bg-[#3d3d3d] pr-1">
            <span className="text-[52px] leading-none font-bold text-white">1</span>
          </div>
          <div className="relative h-[75px] w-[93px] bg-[#0a246a] p-1">
            <div className="flex h-[67px] w-[85px] items-center justify-center border border-dotted border-white bg-[#3d3d3d]">
              <span className="pr-0.5 text-[52px] leading-none font-bold text-white">2</span>
            </div>
            <div className="absolute inset-[5px] bg-[repeating-conic-gradient(#0a246a_0_25%,transparent_0_50%)] bg-[length:2px_2px]" />
          </div>
        </div>
        <Fit w={35} className="mt-1 h-[14px] self-start leading-[14px]">Display:</Fit>
        <div className={`flex h-[21px] w-[356px] shrink-0 items-center bg-white py-0.5 pr-px pl-[3px] ${sunken}`}>
          <Fit w={222} className="pt-px">2. Default Monitor on NVIDIA Quadro NVS 285</Fit>
          <DropArrow className="ml-auto self-stretch" />
        </div>
        <div className="mt-[13px] flex shrink-0 gap-[11px]">
          <Group title="Screen resolution" titleWidth={89} className="w-[172px]">
            <div className="flex h-[31px] pt-[11px] pl-2">
              <Fit w={21} className="-mt-0.5 h-[14px] leading-[14px]">Less</Fit>
              <div className="ml-[17px]"><Slider /></div>
              <Fit w={24} className="-mt-0.5 ml-[15px] h-[14px] leading-[14px]">More</Fit>
            </div>
            <Fit w={94} className="mt-[11px] self-center pr-0.5 leading-[14px]">1280 by 1024 pixels</Fit>
          </Group>
          <Group title="Color quality" titleWidth={66} className="w-[173px] px-2 pt-[11px]">
            <div className={`flex h-[21px] w-[154px] shrink-0 items-center bg-white py-0.5 pr-px pl-[3px] ${sunken}`}>
              <Fit w={71} className="pt-px">Highest (32 bit)</Fit>
              <DropArrow className="ml-auto self-stretch" />
            </div>
            <div className="mt-[7px] h-[14px] w-[154px] shrink-0 bg-[linear-gradient(90deg,#ff0090_0%,#ff0030_8%,#ff9000_18%,#ffff00_32%,#90ff00_40%,#00ff80_46%,#00ffb0_58%,#00b0ff_66%,#0010b0_77%,#9000ff_84%,#ff00e0_96%,#ff0090_100%)] bg-[length:51.3px_100%] shadow-[0_1px_0_#fff]" />
          </Group>
        </div>
        <div className="mt-[3px] flex h-[14px] shrink-0 items-center">
          <div className={`size-[13px] bg-[#d4d0c8] ${sunken}`} />
          <Fit w={180} className="ml-[5px] pt-0.5 text-[#808080] [text-shadow:1px_1px_0_#fff]">Use this device as the primary monitor.</Fit>
        </div>
        <div className="mt-[3px] flex h-[14px] shrink-0 items-center">
          <div className={`size-[13px] bg-white ${sunken}`} />
          <Fit w={219} className="ml-[5px] pt-0.5">Extend my Windows desktop onto this monitor.</Fit>
        </div>
        <div className="mt-[13px] ml-[91px] flex">
          <Button w={34} className="w-[84px]">Identify</Button>
          <Button w={70} className="ml-[3px] w-[89px]">Troubleshoot...</Button>
          <Button w={49} className="ml-1.5 w-[84px]">Advanced</Button>
        </div>
      </div>
      <div className="mt-[5px] ml-[155px] flex gap-1.5">
        <div className="flex h-6 w-[75px] border border-black">
          <Button w={14} className="h-full w-full">OK</Button>
        </div>
        <Button w={33} className="w-[75px]">Cancel</Button>
        <Button w={27} className="w-[75px] text-[#808080] [text-shadow:1px_1px_0_#fff]">Apply</Button>
      </div>
    </section>
  );
}

function DesktopIcon({ icon, lines, shortcut, className }) {
  return (
    <div className={`absolute flex w-20 flex-col items-center text-[11px] leading-[13px] text-white ${tahoma} ${className}`}>
      <div className="relative">
        <Icon name={icon} />
        {shortcut && (
          <svg viewBox="0 0 11 11" className="absolute bottom-0.5 left-px size-[11px]">
            <rect x=".5" y=".5" width="10" height="10" fill="#fff" stroke="#000" />
            <path d="M4 2H9V7L7.500 5.500Q5 7 5 9H3Q2.500 6 5.500 3.500Z" />
          </svg>
        )}
      </div>
      <div className="mt-[5px] flex flex-col items-center">
        {lines.map(([text, w]) => <Fit key={text} w={w} className="h-[13px]">{text}</Fit>)}
      </div>
    </div>
  );
}

export default function App() {
  return (
    <div className="relative h-[1024px] w-[1280px] overflow-hidden bg-white">
      <Defs />
      <div className="relative h-[1018px] w-[1265px] overflow-hidden border-b border-[#b0b0b0] bg-[#3d3d3d]">
        <DesktopIcon icon="bin" lines={[["Recycle Bin", 57]]} className="-left-[20px] -top-[3px]" />
        <DesktopIcon icon="computer" lines={[["My Computer", 63]]} className="-left-[19px] top-[75px]" />
        <DesktopIcon icon="shortcutFolder" shortcut lines={[["Localizers", 46]]} className="left-[281px] -top-[3px]" />
        <DesktopIcon icon="matlab" shortcut lines={[["MATLAB", 39], ["R2010b", 37]]} className="left-[357px] -top-[3px]" />
        <ControlPanel />
        <DisplayProperties />
      </div>
    </div>
  );
}
